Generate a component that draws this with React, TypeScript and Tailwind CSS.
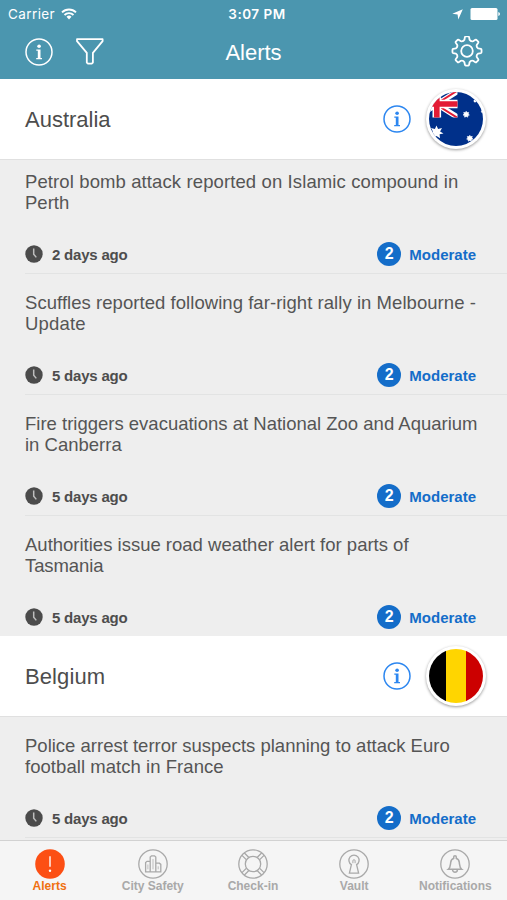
import React from "react";

type Alert = { lines: { text: string; spacing: string }[]; age: string };

const australia: Alert[] = [
  {
    lines: [
      { text: "Petrol bomb attack reported on Islamic compound in", spacing: "tracking-[0.11px]" },
      { text: "Perth", spacing: "tracking-normal" },
    ],
    age: "2 days ago",
  },
  {
    lines: [
      { text: "Scuffles reported following far-right rally in Melbourne -", spacing: "tracking-[0.05px]" },
      { text: "Update", spacing: "tracking-[0.2px]" },
    ],
    age: "5 days ago",
  },
  {
    lines: [
      { text: "Fire triggers evacuations at National Zoo and Aquarium", spacing: "tracking-normal" },
      { text: "in Canberra", spacing: "tracking-normal" },
    ],
    age: "5 days ago",
  },
  {
    lines: [
      { text: "Authorities issue road weather alert for parts of", spacing: "tracking-normal" },
      { text: "Tasmania", spacing: "tracking-[-0.1px]" },
    ],
    age: "5 days ago",
  },
];

const belgium: Alert[] = [
  {
    lines: [
      { text: "Police arrest terror suspects planning to attack Euro", spacing: "tracking-normal" },
      { text: "football match in France", spacing: "tracking-[0.05px]" },
    ],
    age: "5 days ago",
  },
];

// Eight-toothed gear outline centred on the origin
function gearPath(): string {
  const pt = (r: number, deg: number) => {
    const a = (deg * Math.PI) / 180;
    return `${(r * Math.sin(a)).toFixed(2)} ${(-r * Math.cos(a)).toFixed(2)}`;
  };
  let d = "";
  for (let i = 0; i < 8; i++) {
    const c = i * 45;
    d += `${i === 0 ? "M" : "L"}${pt(11.5, c - 13)} L${pt(14, c - 8.5)} Q${pt(14.6, c - 7.5)} ${pt(14.6, c - 5)} L${pt(14.6, c + 5)} Q${pt(14.6, c + 7.5)} ${pt(14, c + 8.5)} L${pt(11.5, c + 13)} Q${pt(9.9, c + 22.5)} ${pt(11.5, c + 32)} `;
  }
  return d + "Z";
}

function InfoIcon({ className }: { className: string }) {
  return (
    <svg viewBox="0 0 28 28" className={`h-7 w-7 shrink-0 ${className}`} fill="none" stroke="currentColor">
      <circle cx="14" cy="14" r="13" strokeWidth="1.5" />
      <circle cx="14.1" cy="8.2" r="1.8" fill="currentColor" stroke="none" />
      <path d="M11.3 11.5h4.2v8.6h1.5v1.2h-5.8v-1.2h1.6v-7.3h-1.5z" fill="currentColor" stroke="none" />
    </svg>
  );
}

function Clock() {
  return (
    <svg viewBox="0 0 18 18" className="h-[18px] w-[18px]">
      <circle cx="9" cy="9" r="8.7" fill="#4b4b4b" />
      <path d="M8.7 3.6v5.6l2.6 3.2" fill="none" stroke="#bdbdbd" strokeWidth="1.5" />
    </svg>
  );
}

function AustraliaFlag() {
  return (
    <svg viewBox="0 0 54 54" className="h-[54px] w-[54px]">
      <defs>
        <clipPath id="au">
          <circle cx="27" cy="27" r="27" />
        </clipPath>
        <clipPath id="jack">
          <rect x="-14" y="0" width="42.5" height="25.5" />
        </clipPath>
      </defs>
      <g clipPath="url(#au)">
        <rect width="54" height="54" fill="#00308a" />
        <g clipPath="url(#jack)">
          <path d="M-13 -1L29 25.5M-13 25.5L29 -1" stroke="#fff" strokeWidth="5.5" />
          <path d="M8 13L29 26.2M8 11.5L29 -1.8" stroke="#e31b35" strokeWidth="2" />
          <path d="M7.8 0V26M-14 12H29" stroke="#fff" strokeWidth="8.6" />
          <path d="M7.8 0V26M-14 12H29" stroke="#e31b35" strokeWidth="5.6" />
        </g>
        <path
          fill="#fff"
          d="M7.5 33.5l1.6 3.6 3.9-1.1-1.9 3.4 3.4 2.1-3.9.8.4 4-3.5-2.2-3.5 2.2.4-4-3.9-.8 3.4-2.1-1.9-3.4 3.9 1.1z"
        />
        <path
          fill="#fff"
          stroke="#fff"
          strokeWidth=".6"
          d="M37.2 19.3l.9 1.3 1.6-.2-.5 1.5 1.2 1.1-1.5.6-.2 1.6-1.5-.8-1.5.8-.2-1.6-1.5-.6 1.2-1.1-.5-1.5 1.6.2zM40.8 43.3l.9 1.3 1.6-.2-.5 1.5 1.2 1.1-1.5.6-.2 1.6-1.5-.8-1.5.8-.2-1.6-1.5-.6 1.2-1.1-.5-1.5 1.6.2z"
        />
        <circle cx="46" cy="9" r="1.4" fill="#fff" />
        <circle cx="53.2" cy="19.5" r="1.2" fill="#fff" />
      </g>
    </svg>
  );
}

function BelgiumFlag() {
  return (
    <div className="flex h-[54px] w-[54px] overflow-hidden rounded-full">
      <div className="w-[17px] bg-black" />
      <div className="w-[20px] bg-[#ffd500]" />
      <div className="w-[17px] bg-[#cc0000]" />
    </div>
  );
}

function SectionHeader({ name, spacing, flag }: { name: string; spacing: string; flag: React.ReactNode }) {
  return (
    <div className="flex h-20 shrink-0 items-center bg-white pr-[21px] pl-[25px]">
      <h2 className={`mt-px flex-1 text-[22px] text-[#4d4d4d] ${spacing}`}>{name}</h2>
      <InfoIcon className="text-[#2d87f0]" />
      <div className="ml-[15px] rounded-full bg-white p-[3px] shadow-[0_1px_3px_rgba(0,0,0,0.4)]">{flag}</div>
    </div>
  );
}

function AlertRow({ alert, first, last }: { alert: Alert; first?: boolean; last?: boolean }) {
  return (
    <li className={`flex flex-col pl-[25px] ${first ? "h-[114px] pt-[11px]" : "h-[121px] pt-[18px]"}`}>
      <div className="h-[42px] text-[18.5px] leading-[21px] whitespace-nowrap text-[#555]">
        {alert.lines.map((l) => (
          <div key={l.text} className={l.spacing}>
            {l.text}
          </div>
        ))}
      </div>
      <div className={`mt-[29px] flex flex-1 items-start pr-[31px] ${last ? "" : "border-b border-[#e2e3e3]"}`}>
        <div className="flex h-6 flex-1 items-center">
          <Clock />
          <span className="mt-0.5 ml-[9px] text-[15px] font-bold tracking-[-0.2px] text-[#4d4d4d]">{alert.age}</span>
        </div>
        <div className="flex h-6 items-center">
          <span className="flex h-6 w-6 items-center justify-center rounded-full bg-[#146dc9] text-[16px] font-bold text-white">
            2
          </span>
          <span className="mt-0.5 ml-2 text-[15px] font-bold text-[#146dc9]">Moderate</span>
        </div>
      </div>
    </li>
  );
}

function Tab({ label, className, children }: { label: string; className: string; children: React.ReactNode }) {
  return (
    <div className={`flex w-[101.2px] flex-col items-center pt-2 ${className}`}>
      <svg viewBox="0 0 30 30" className="h-[30px] w-[30px]" fill="none" stroke="currentColor" strokeWidth="1.3">
        {children}
      </svg>
      <span className="text-[12px] leading-[14px] font-bold whitespace-nowrap">{label}</span>
    </div>
  );
}

export default function App() {
  return (
    <div className="flex h-[900px] w-[507px] flex-col overflow-hidden bg-[#eee] font-['Liberation_Sans',Arial,sans-serif]">
      <header className="flex h-[79px] shrink-0 flex-col bg-[#4b96af] text-white">
        <div className="flex h-7 items-center justify-between pr-[7px] pl-2 text-[13.5px]">
          <div className="flex w-40 items-center gap-1.5 font-['Inter',sans-serif]">
            <span className="tracking-[0.4px]">Carrier</span>
            <svg viewBox="0 0 16 12" className="h-3 w-4" fill="none" stroke="#fff" strokeWidth="1.9">
              <path d="M1 4.4a10 10 0 0 1 14 0M3.5 7a6.4 6.4 0 0 1 9 0" />
              <path d="M5.5 8.8a3.6 3.6 0 0 1 5 0L8 11.6z" fill="#fff" stroke="none" />
            </svg>
          </div>
          <span className="ml-1.5 font-['Inter',sans-serif] font-semibold tracking-[0.5px]">3:07 PM</span>
          <div className="flex w-40 items-center justify-end gap-[7px]">
            <svg viewBox="0 0 11 11" className="h-[11px] w-[11px]" fill="#fff">
              <path d="M10.8.3L6.3 10.5 5.6 5.5.3 4.8z" />
            </svg>
            <svg viewBox="0 0 30 12" className="h-3 w-[30px]" fill="#fff">
              <rect x=".5" width="27" height="12" rx="1.5" />
              <path d="M28.3 4q1.7.5 1.7 2t-1.7 2z" />
            </svg>
          </div>
        </div>
        <div className="flex h-[48px] items-center pr-[24px] pl-[25px]">
          <div className="flex w-[120px] items-center gap-[23px]">
            <InfoIcon className="text-white" />
            <svg viewBox="0 0 28 28" className="h-7 w-7" fill="none" stroke="#fff" strokeWidth="1.8" strokeLinejoin="round">
              <path d="M1 1.2H26.6V3.2L16.9 14.8V24.5L15.7 25.7H12L10.8 24.5V14.8L1 3.2z" />
            </svg>
          </div>
          <h1 className="flex-1 text-center text-[22px]">Alerts</h1>
          <div className="flex w-[121px] justify-end">
            <svg viewBox="-16 -15 32 32" className="h-8 w-8" fill="none" stroke="#fff" strokeWidth="1.8" strokeLinejoin="round">
              <path d={gearPath()} />
              <circle r="5.8" />
            </svg>
          </div>
        </div>
      </header>

      <main className="flex min-h-0 flex-1 flex-col overflow-hidden">
        <SectionHeader name="Australia" spacing="tracking-normal" flag={<AustraliaFlag />} />
        <ul className="h-[477px] shrink-0 overflow-hidden border-t border-[#e0e0e0]">
          {australia.map((a, i) => (
            <AlertRow key={a.lines[0].text} alert={a} first={i === 0} last={i === 3} />
          ))}
        </ul>
        <SectionHeader name="Belgium" spacing="tracking-[0.1px]" flag={<BelgiumFlag />} />
        <ul className="h-[124px] shrink-0 border-t border-[#e0e0e0]">
          {belgium.map((a) => (
            <AlertRow key={a.lines[0].text} alert={a} />
          ))}
        </ul>
      </main>

      <nav className="flex h-[60px] shrink-0 border-t border-[#d2d2d2] bg-[#f5f5f5]">
        <Tab label="Alerts" className="pr-0.5 text-[#f0700f]">
          <circle cx="15" cy="15" r="14.8" fill="#fc4f14" stroke="none" />
          <path d="M15 7.3V17.8" stroke="#fff" strokeWidth="1.4" />
          <circle cx="15" cy="21.8" r="1.2" fill="#fff" stroke="none" />
        </Tab>
        <Tab label="City Safety" className="pl-0.5 text-[#a9a9a9]">
          <circle cx="15" cy="15" r="14.2" />
          <path d="M12.2 22.8V8l1.3-1.2h3L17.8 8v14.8zM12.2 12.3H9L7.6 13.5v9.3h4.6M17.8 14.2h3.6l1.4 1.2v7.4h-5" />
          <path d="M9.9 15.5v4.8M15 10v10.3M20.2 17.3v3" strokeWidth=".7" />
        </Tab>
        <Tab label="Check-in" className="text-[#a9a9a9]">
          <circle cx="15" cy="15" r="14.2" />
          <circle cx="15" cy="15" r="7.7" />
          <path d="M6.4 4l4.5 4.5M4 6.4l4.5 4.5M23.6 4l-4.5 4.5M26 6.4l-4.5 4.5M6.4 26l4.5-4.5M4 23.6l4.5-4.5M23.6 26l-4.5-4.5M26 23.6l-4.5-4.5" />
        </Tab>
        <Tab label="Vault" className="text-[#a9a9a9]">
          <circle cx="15" cy="15" r="14.2" />
          <path d="M12.4 15.6a5.1 5.1 0 1 1 5.2 0l2 8.6h-9.2z" />
          <path d="M13.9 14.2v-2.4a1.1 1.1 0 1 1 2.2 0v2.4" strokeWidth="1" />
        </Tab>
        <Tab label="Notifications" className="text-[#a9a9a9]">
          <circle cx="15" cy="15" r="14.2" />
          <path d="M8.3 20.3c2.2-1.8 2-4 2.4-7 .3-2.2 1.4-3.4 3-3.8V8a1.3 1.3 0 0 1 2.6 0v1.5c1.6.4 2.7 1.6 3 3.8.4 3 .2 5.2 2.4 7zM12.6 20.8a2.4 2.4 0 0 0 4.8 0" strokeWidth="1.5" />
        </Tab>
      </nav>
    </div>
  );
}
